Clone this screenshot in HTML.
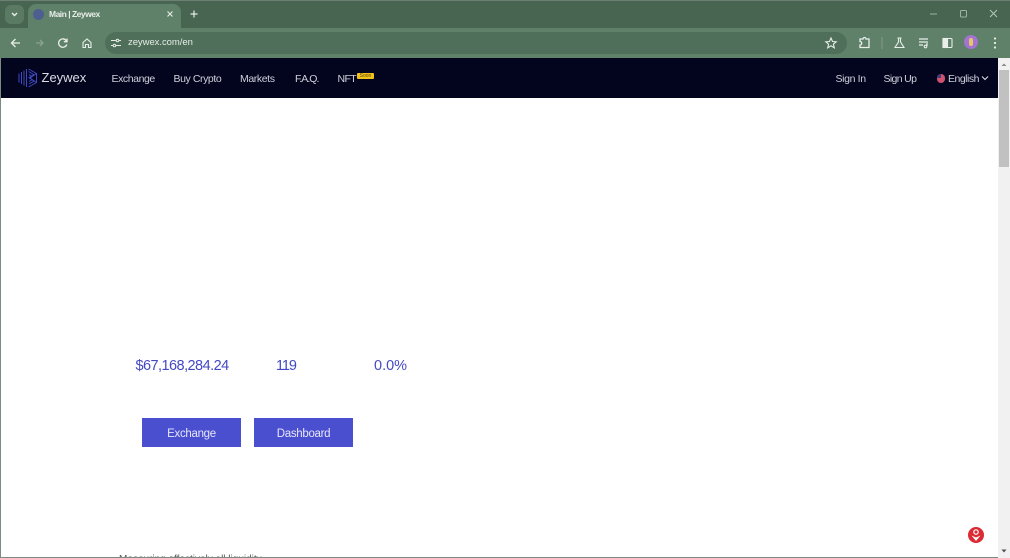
<!DOCTYPE html>
<html lang="en"><head><meta charset="utf-8"><title>Main | Zeywex</title>
<style>
html,body{margin:0;padding:0;width:1010px;height:558px;overflow:hidden;background:#fff;font-family:"Liberation Sans",sans-serif}
#root{position:relative;width:1010px;height:558px;overflow:hidden}
.a{position:absolute;white-space:nowrap}
.nav{color:#cfd0da;font-size:10.5px;line-height:14px;top:71.500px;letter-spacing:-.42px}
.btn{background:#4a4fd0;color:#e6e7fa;font-size:11.5px;letter-spacing:-.3px;text-align:center;line-height:33px;height:29px;width:99px;top:418px}
.stat{color:#4348c4;font-size:14.5px;line-height:18px;top:357px}
svg{position:absolute;overflow:visible}
</style></head><body><div id="root">
<!-- browser chrome -->
<div class="a" style="left:0;top:0;width:1010px;height:28px;background:#486552"></div>
<div class="a" style="left:0;top:28px;width:1010px;height:30px;background:#5f8169"></div>
<div class="a" style="left:0;top:0;width:1010px;height:1px;background:#6b7f72"></div>
<div class="a" style="left:5px;top:5px;width:19px;height:19px;border-radius:6px;background:#5a7a64"></div>
<svg style="left:0;top:0" width="30" height="28"><path d="M12 13l2.500 2.500L17 13" fill="none" stroke="#e8efe9" stroke-width="1.400"/></svg>
<div class="a" style="left:28px;top:4px;width:153px;height:24px;border-radius:8px 8px 0 0;background:#5f8169"></div>
<div class="a" style="left:33px;top:9px;width:11px;height:11px;border-radius:50%;background:#4d5f8f"></div>
<div class="a" style="left:49px;top:8px;font-size:8.500px;font-weight:bold;line-height:13px;letter-spacing:-.5px;color:#e6ede8">Main | Zeywex</div>
<svg style="left:0;top:0" width="200" height="28"><path d="M167.500 11.500l5 5M172.500 11.500l-5 5" stroke="#e6ede8" stroke-width="1.100"/><path d="M194 10.500v7M190.500 14h7" stroke="#e6ede8" stroke-width="1.200"/></svg>
<svg style="left:920px;top:0" width="90" height="28"><path d="M10 14h7" stroke="#9db2a4" stroke-width="1"/><rect x="40.500" y="10.500" width="6" height="6.500" rx="1" fill="none" stroke="#9db2a4"/><path d="M70 10l7 7M77 10l-7 7" stroke="#b5c6ba" stroke-width="1"/></svg>
<!-- toolbar icons -->
<svg style="left:0;top:28px" width="110" height="30" fill="none" stroke="#e8eee9" stroke-width="1.300">
<path d="M20 15h-8M15.500 11l-4 4 4 4"/>
<path d="M36 15h7M40 12l3 3-3 3" stroke="#8ba392"/>
<path d="M66.500 13a4.200 4.200 0 1 0 .3 3.500M67 10.500v3.200h-3.200"/>
<path d="M83 14.500l4-3.500 4 3.500v5h-2.500v-3h-3v3H83z" stroke-width="1.100"/>
</svg>
<div class="a" style="left:105px;top:32px;width:742px;height:22px;border-radius:11px;background:#4f6f5a"></div>
<svg style="left:105px;top:32px" width="25" height="22" fill="none" stroke="#e6ede8" stroke-width="1"><path d="M6 8.500h5M14 8.500h2M6 13.500h2M11 13.500h5"/><circle cx="12.500" cy="8.500" r="1.300"/><circle cx="9.500" cy="13.500" r="1.300"/></svg>
<div class="a" style="left:128px;top:36px;font-size:9.500px;line-height:14px;letter-spacing:-.05px;color:#e6ede8">zeywex.com/en</div>
<svg style="left:820px;top:28px" width="190" height="30" fill="none" stroke="#e8eee9" stroke-width="1.100">
<path d="M11 10l1.500 3.500 3.700.3-2.800 2.400.9 3.600-3.300-2-3.300 2 .9-3.600-2.800-2.400 3.700-.3z"/>
<path d="M40 11h3a1.500 1.500 0 0 1 3 0h3v8.500h-9v-2.500a1.500 1.500 0 0 0 0-3.500z" stroke-width="1.300"/>
<path d="M62 9v12" stroke="#7f9a88"/>
<path d="M77.500 10h4M78.500 10v4l-3.500 5.500h9L80.500 14v-4"/>
<path d="M99 11h9M99 14h7M99 17h4M107 13v5" stroke-width="1.200"/><circle cx="105.500" cy="18.500" r="1.300"/>
<rect x="123" y="10.500" width="9" height="9" rx="1"/><rect x="123" y="10.500" width="4.500" height="9" fill="#e8eee9"/>
<circle cx="175" cy="10.500" r="1.100" fill="#e8eee9" stroke="none"/><circle cx="175" cy="15" r="1.100" fill="#e8eee9" stroke="none"/><circle cx="175" cy="19.500" r="1.100" fill="#e8eee9" stroke="none"/>
</svg>
<div class="a" style="left:964px;top:35px;width:14px;height:14px;border-radius:50%;background:#a373cf"></div>
<div class="a" style="left:969px;top:38px;width:4px;height:8px;border-radius:2px;background:#e6c56c"></div>
<!-- site nav -->
<div class="a" style="left:1px;top:58px;width:997px;height:39.500px;background:#03041e"></div>
<div class="a" style="left:0;top:58px;width:1px;height:500px;background:#7d8a82"></div>
<svg style="left:18px;top:68px" width="20" height="20" fill="none" stroke="#3f49c0" stroke-width="1">
<path d="M1 5.500v9M3.500 4v12M6 2.500v15M8.500 1v18"/>
<path d="M10.500 1l8 4.500v9l-8 4.500M10.500 3.500l5.500 3.200-5 3 5 3.300-5 3M11 6.500l2.700 1.700M11 13.500l2.700-1.500"/>
<path d="M18.500 5.500L12 10l6.500 4.500"/>
</svg>
<div class="a" style="left:41.500px;top:69px;font-size:13px;line-height:18px;color:#dcdde5">Zeywex</div>
<div class="a nav" style="left:111.500px">Exchange</div>
<div class="a nav" style="left:173.500px">Buy Crypto</div>
<div class="a nav" style="left:240px;letter-spacing:-.4px">Markets</div>
<div class="a nav" style="left:295px;letter-spacing:-.95px">F.A.Q.</div>
<div class="a nav" style="left:337.500px;letter-spacing:-.6px">NFT</div>
<div class="a" style="left:357px;top:73px;width:17px;height:6px;border-radius:1px;background:#f2c21c;color:#5a4608;font-size:5px;line-height:6px;text-align:center">Soon</div>
<div class="a nav" style="left:835.500px;letter-spacing:-.35px">Sign In</div>
<div class="a nav" style="left:883.500px;letter-spacing:-.65px">Sign Up</div>
<div class="a" style="left:936.500px;top:74px;width:8.500px;height:8.500px;border-radius:50%;background:#d0526f;overflow:hidden"><div style="width:4px;height:4px;background:#3e3f7c"></div></div>
<div class="a nav" style="left:948px;letter-spacing:-.5px">English</div>
<svg style="left:980px;top:73px" width="10" height="10"><path d="M2 3.500L5 6.500 8 3.500" fill="none" stroke="#dedfe6" stroke-width="1.100"/></svg>
<!-- scrollbar -->
<div class="a" style="left:998px;top:58px;width:12px;height:500px;background:#f1f1f1"></div>
<div class="a" style="left:999px;top:70px;width:10px;height:97px;background:#c1c1c1"></div>
<svg style="left:998px;top:58px" width="12" height="500"><path d="M3.500 8L6 5.500 8.500 8z" fill="#8a8a8a"/><path d="M3.500 491.500L6 494.500 8.500 491.500z" fill="#505050"/></svg>
<!-- content -->
<div class="a stat" style="left:135.500px;letter-spacing:-.55px">$67,168,284.24</div>
<div class="a stat" style="left:276px;letter-spacing:-1.100px">119</div>
<div class="a stat" style="left:374px">0.0%</div>
<div class="a btn" style="left:142px">Exchange</div>
<div class="a btn" style="left:254px">Dashboard</div>
<div class="a" style="left:119px;top:554px;font-size:10px;line-height:12px;color:#555">Measuring effectively all liquidity</div>
<div class="a" style="left:968px;top:527px;width:16px;height:16px;border-radius:50%;background:#dc2a35"></div>
<svg style="left:968px;top:527px" width="16" height="16"><circle cx="8" cy="5" r="2.200" fill="none" stroke="#fff" stroke-width="1.200"/><path d="M3.500 8.500L8 10.500l4.500-2L8 14z" fill="#fff"/></svg>
<div class="a" style="left:0;top:557px;width:998px;height:1px;background:#7d8a82"></div>
</div></body></html>
